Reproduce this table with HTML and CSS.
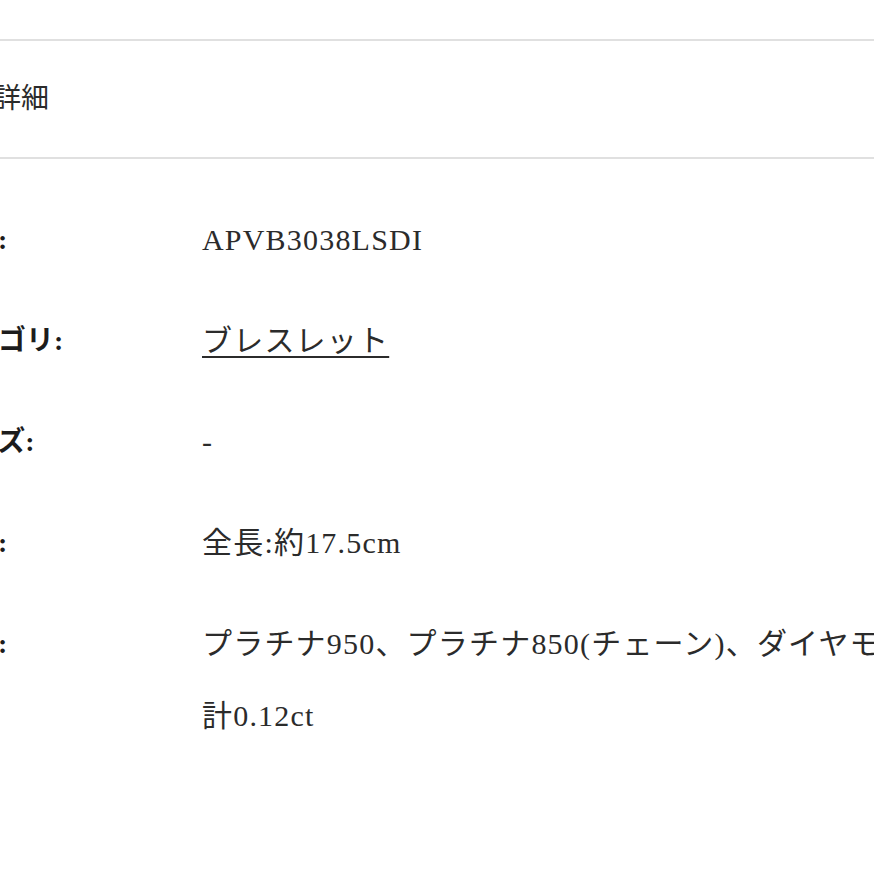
FILE: index.html
```html
<!DOCTYPE html>
<html lang="ja">
<head>
  <meta charset="UTF-8">
  <meta name="viewport" content="width=device-width, initial-scale=1.0">
  <title>商品詳細</title>
  <link rel="stylesheet" href="styles.css">
</head>
<body>
  <section class="product-detail">
    <h2 class="detail-title">商品詳細</h2>

    <dl class="detail-table">
      <dt>品番:</dt>
      <dd>APVB3038LSDI</dd>

      <dt>カテゴリ:</dt>
      <dd><a href="#">ブレスレット</a></dd>

      <dt>サイズ:</dt>
      <dd>-</dd>

      <dt>長さ:</dt>
      <dd>全長:約17.5cm</dd>

      <dt>素材:</dt>
      <dd>プラチナ950、プラチナ850(チェーン)、ダイヤモンド計0.12ct</dd>
    </dl>
  </section>
</body>
</html>
```

FILE: styles.css
```css
:root {
  --text-main: #2b2b2b;
  --text-label: #1c1c1c;
  --line: #e0e0e0;
}

* {
  box-sizing: border-box;
  margin: 0;
  padding: 0;
}

html,
body {
  overflow: hidden;
}

body {
  background: #ffffff;
  color: var(--text-main);
  font-family: 'Liberation Serif', 'Noto Sans CJK JP', serif;
}

.product-detail {
  width: 1100px;
  margin-left: -63px;
  padding-top: 39px;
}

.detail-title {
  font-size: 28px;
  font-weight: 400;
  line-height: 40px;
  padding: 38px 0;
  border-top: 2px solid var(--line);
  border-bottom: 2px solid var(--line);
  color: var(--text-main);
}

.detail-table {
  display: grid;
  grid-template-columns: 265px 750px;
  row-gap: 29px;
  padding-top: 45px;
}

.detail-table dt {
  padding-left: 5px;
  font-size: 28px;
  font-weight: 700;
  line-height: 72px;
  color: var(--text-label);
}

.detail-table dd {
  font-size: 30px;
  line-height: 72px;
  letter-spacing: 1.2px;
}

.detail-table a {
  color: var(--text-main);
  text-decoration: underline;
  text-decoration-thickness: 2px;
  text-underline-offset: 5px;
}
```
